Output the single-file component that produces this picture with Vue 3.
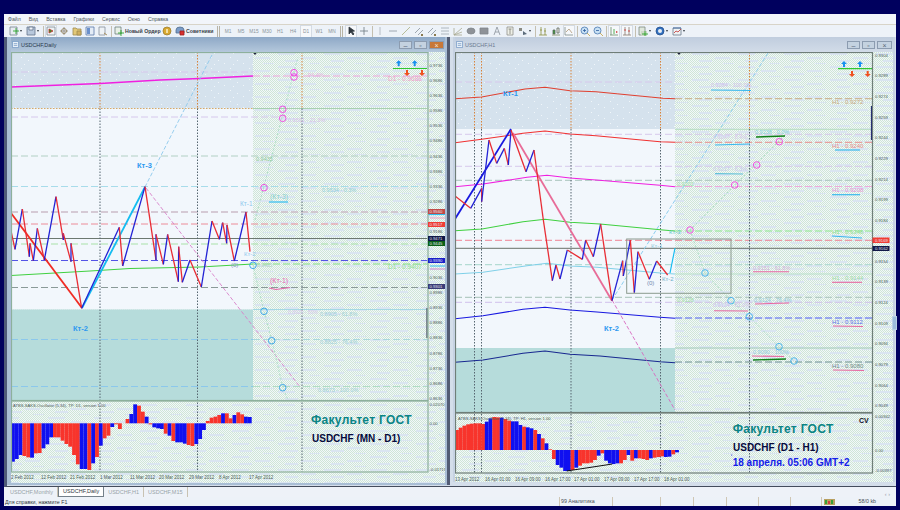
<script setup>
const fromZoom = (ox, oy, list) => list.map(([x, y]) => [ox + x / 3, oy + y / 3])
const pts = (list) => list.map((p) => p.join(',')).join(' ')

const menu = ['Файл', 'Вид', 'Вставка', 'Графики', 'Сервис', 'Окно', 'Справка']

const icons = {
  chart: [['M1 1h6v8H1z', '#f4f4ee', '#7d8a96'], ['M3 7V4M5 7V3', 'none', '#7a8a78']],
  add: [['M1 1h7v8H1z', '#e8edf2', '#73818e'], ['M4 5h6M7 2v6', 'none', '#18a018']],
  disk: [['M1 1h8v8H1z', '#b8c8dc', '#66758a'], ['M3 1h4v3H3z', '#f0f4f8', '#66758a']],
  arrows: [['M1 1h8v8H1z', '#eef2f4', '#7d8a96'], ['M3 3l4 2-4 2z', '#2a9a2a', '#c83030']],
  target: [['M5 1v8M1 5h8', 'none', '#8a8478'], ['M2.5 5a2.5 2.5 0 1 0 5 0a2.5 2.5 0 1 0-5 0', 'none', '#8a7a50']],
  folder: [['M1 2h3l1 1h4v6H1z', '#e2c878', '#a08c50'], ['M5 5h4v4H5z', '#d0b060', '#a08c50']],
  box: [['M1 1h8v8H1z', '#e4ecf6', '#5a78a8'], ['M2 2h3v6H2z', '#6a90cc', 'none']],
  page: [['M1 1h6v8H1z', '#eef2f6', '#85919c'], ['M6 7l3 2', 'none', '#a08040']],
  order: [['M1 1h6v7H1z', '#e8f0e8', '#70807c'], ['M4 7h6M7 4v6', 'none', '#18a018']],
  gold: [['M1 5a4 4 0 1 0 8 0a4 4 0 1 0-8 0', '#d8a830', '#a08030'], ['M4 3h2v4H4z', '#f4e0a0', 'none']],
  robot: [['M1 4a4 3 0 1 1 8 0v3H1z', '#7a9cc8', '#55708f'], ['M5 5h4v4H5z', '#d83030', '#a02020']],
  cursor: [['M3 1v7l2-2 2 3 1-1-2-2.5 2.5-.5z', '#303840', '#303840']],
  cross: [['M5 1v8M1 5h8', 'none', '#6d7882']],
  vert: [['M5 1v8', 'none', '#a8b0b8']],
  horiz: [['M1 5h8', 'none', '#8a949e']],
  slant: [['M1 9L9 1', 'none', '#a8ae80']],
  chan: [['M1 7L6 2M4 9l5-5', 'none', '#88929c'], ['M7 8h2v2H7z', '#8a7a50', 'none']],
  fibo: [['M1 2h8M1 5h8M1 8h8', 'none', '#a0a8b0']],
  fan: [['M1 9L9 2M1 9L9 6M1 2v7h8', 'none', '#a8a890']],
  ellipse: [['M1 5a4 3 0 1 0 8 0a4 3 0 1 0-8 0', '#8e9298', '#80868c']],
  rect: [['M1 2h8v6H1z', '#8e9298', '#80868c']],
  letter: [['M2 9l3-8 3 8M3.2 6h3.6', 'none', '#8a929a']],
  label: [['M2 1h6v8H2z', '#eef0e8', '#90908a'], ['M3.5 3h3M5 3v5', 'none', '#808078']],
  shapes: [['M1 2h3v3H1z', '#8a8a82', 'none'], ['M5 5l4 3-4 1z', '#5a6a7a', 'none']],
  bars: [['M3 1v8M7 2v7M1 9h8', 'none', '#8a9040'], ['M2 4h2M6 5h2', 'none', '#8a9040']],
  candles: [['M2 4h2v4H2z', '#3a9a3a', '#606860'], ['M6 2h2v5H6z', '#f0f0e8', '#606860'], ['M1 9h8', 'none', '#808a60']],
  lineChart: [['M1 1v8h8', 'none', '#7d8a8a'], ['M2 6l3-3 3 4', 'none', '#b09878']],
  zoomIn: [['M1 4.5a3.5 3.5 0 1 0 7 0a3.5 3.5 0 1 0-7 0', '#c8e0f4', '#4a78b0'], ['M7 7l3 3', 'none', '#c0a040'], ['M3 4.5h3M4.5 3v3', 'none', '#3060a0']],
  zoomOut: [['M1 4.5a3.5 3.5 0 1 0 7 0a3.5 3.5 0 1 0-7 0', '#c8e0f4', '#4a78b0'], ['M7 7l3 3', 'none', '#c0a040'], ['M3 4.5h3', 'none', '#3060a0']],
  shift: [['M2 1v8M1 9h8', 'none', '#6a8a6a'], ['M5 3v5', 'none', '#30a030'], ['M7 5l2 1-2 1z', '#c83030', 'none']],
  scroll: [['M3 1v8M7 1v8M1 9h8', 'none', '#8a7a70'], ['M2 4h2M6 5h2', 'none', '#d02828']],
  tmpl: [['M1 1h6v8H1z', '#dfe8dc', '#7f8a80'], ['M3 5h6v5H3z', '#cdd8c8', 'none'], ['M4 8h6M7 5v5', 'none', '#18a018']],
  globe: [['M1 5a4 4 0 1 0 8 0a4 4 0 1 0-8 0', '#3070c0', '#28508c'], ['M3 5a2 2 0 1 0 4 0a2 2 0 1 0-4 0', '#e8eef4', 'none']],
  tester: [['M1 2h8v7H1z', '#eef2f4', '#6a7a8c'], ['M2 7l2-2 2 1 3-3', 'none', '#c03030'], ['M1 2h8', 'none', '#3060a0']],
}

const toolbar = [
  { icon: 'add', arrow: true }, { icon: 'disk', arrow: true }, { sep: 1 },
  { icon: 'arrows', pressed: true }, { icon: 'target' }, { icon: 'folder' }, { icon: 'box' }, { icon: 'page' }, { sep: 1 },
  { icon: 'order', text: 'Новый Ордер', cls: 'wide-order' }, { icon: 'gold' }, { icon: 'robot', text: 'Советники', cls: 'wide-expert' }, { sep: 2 },
  { tf: 'M1' }, { tf: 'M5' }, { tf: 'M15' }, { tf: 'M30' }, { tf: 'H1' }, { tf: 'H4' }, { tf: 'D1', pressed: true }, { tf: 'W1' }, { tf: 'MN' }, { sep: 2 },
  { icon: 'cursor', pressed: true }, { icon: 'cross' }, { sep: 1 },
  { icon: 'vert' }, { icon: 'horiz' }, { icon: 'slant' }, { icon: 'chan' }, { icon: 'chan' }, { icon: 'fibo' },
  { icon: 'fan' }, { icon: 'ellipse' }, { icon: 'rect' }, { icon: 'letter' }, { icon: 'label' }, { icon: 'shapes', arrow: true }, { sep: 1 },
  { icon: 'bars' }, { icon: 'candles' }, { icon: 'lineChart', pressed: true }, { sep: 1 },
  { icon: 'zoomIn' }, { icon: 'zoomOut' }, { sep: 1 },
  { icon: 'shift', pressed: true }, { icon: 'scroll', pressed: true }, { sep: 1 },
  { icon: 'tmpl', arrow: true }, { icon: 'globe', arrow: true }, { icon: 'tester', arrow: true },
]

const zigzagSegments = (list) =>
  list.slice(1).map((p, i) => ({
    a: list[i],
    b: p,
    color: p[1] < list[i][1] ? '#2222d4' : '#e82c34',
  }))

// list: [ y in the zoomed crop, colour ]
const barsFrom = (startX, step, zero, list) =>
  list.map(([zy, c], i) => {
    const y = 395 + zy / 3
    return {
      x: startX + i * step,
      y: Math.min(y, zero),
      h: Math.abs(y - zero),
      fill: c === 'b' ? '#1010f0' : '#f8342c',
    }
  })

const ticks = (first, step, start, pips, count) =>
  Array.from({ length: count }, (_, i) => ({
    y: first + i * step,
    t: (start - i * pips).toFixed(4),
  }))

const freeTicks = (c) =>
  c.prices.filter((p) => !c.tags.some((t) => Math.abs(p.y - (t.y + t.h / 2)) < 5))

const LAV = '#d6c8ec'
const PINK = '#f0a8dc'

const charts = [
  {
    title: 'USDCHF,Daily',
    active: true,
    view: '11 52 434 431',
    w: 434,
    h: 431,
    x0: 11,
    y0: 52,
    shade: 253,
    right: 427.5,
    mainBottom: 400,
    subTop: 401,
    subBottom: 472,
    frame: '#8db09c',
    marker: 255,
    bands: [
      { y: 52, h: 56.5, fill: 'url(#speckle)' },
      { y: 108.5, h: 201, fill: '#f2f7fc' },
      { y: 309.5, h: 90.5, fill: '#b6dcdb' },
    ],
    topBandEnd: 108.5,
    vlines: [100, 197.5, 302],
    hlines: [
      { y: 72, c: LAV, dash: true, end: 253 },
      { y: 76, c: PINK, dash: true, start: 253 },
      { y: 108.5, c: '#d8a868', dash: true, dot: true, end: 253 },
      { y: 108.5, c: '#a8d0b0', start: 253 },
      { y: 117, c: LAV, dash: true, end: 285 },
      { y: 156, c: '#b2d0c4', dash: true },
      { y: 186.5, c: '#a8dcea', dash: true },
      { y: 212, c: '#ccbcc8', dash: true, w: 1.4 },
      { y: 224, c: '#ec8c98', dash: true },
      { y: 238.5, c: '#6c7870' },
      { y: 244, c: '#a8e2a8', dash: true, w: 1.2 },
      { y: 260.5, c: '#5454e6', dash: true },
      { y: 264, c: '#86e086', dash: true, start: 253 },
      { y: 287.5, c: '#8a9a98', dash: true },
      { y: 309.5, c: '#a4d8e4', start: 253 },
      { y: 339.5, c: '#8cc8ec', dash: true, end: 253 },
      { y: 339.5, c: '#a8d8dc', dash: true, start: 253 },
      { y: 386.5, c: '#8cc8ec', dash: true, end: 253 },
      { y: 386.5, c: '#b0dcc4', dash: true, start: 253 },
    ],
    lines: [
      { p: [[11, 87], [100, 83.5], [160, 80], [200, 78.5], [253, 76]], c: '#f020e0', w: 1.3 },
      { p: [[11, 275.5], [90, 271], [130, 268.5], [200, 267], [253, 264]], c: '#40d040', w: 1 },
      { p: [[145, 187], [213, 53]], c: '#8cc8ec', w: 0.9, dash: '4 2' },
      { p: [[146, 188], [300, 387]], c: '#d880c8', w: 0.9, dash: '4 2' },
      { p: [[255, 220], [298, 57]], c: '#a4dcc0', w: 0.9, dash: '2 2' },
      { p: [[253, 265], [264, 311], [272, 341], [283, 388], [288, 400]], c: '#a4dcc0', w: 0.9, dash: '2 2' },
      { p: [[11, 213], [82, 308]], c: '#f02c24', w: 1.8 },
      { p: [[82, 308], [145, 187]], c: '#14bcf0', w: 1.8 },
      { p: [[269, 202], [288, 202]], c: '#30bcf0', w: 1.2 },
      { p: [[269, 288], [276, 289.5], [290, 287.5]], c: '#e868a8', w: 1.2 },
      { p: [[393, 68.5], [427, 68.5]], c: '#30c830', w: 1.2 },
      { p: [[428, 214.5], [445, 214.5]], c: '#30bcf0', w: 1.2 },
      { p: [[430, 218], [445, 218]], c: '#f0a0c0', w: 1 },
      { p: [[430, 266], [445, 266]], c: '#30bcf0', w: 1 },
      { p: [[430, 269], [445, 269]], c: '#d088c8', w: 1 },
      { p: [[427, 308], [427, 338]], c: '#404858', w: 1.2 },
    ],
    zigzag: zigzagSegments(
      fromZoom(0, 200, [
        [33, 93], [45, 148], [67, 27], [88, 170], [90, 130], [100, 182], [112, 85], [133, 180], [168, -10],
        [190, 120], [190, 100], [213, 185], [213, 130], [245, 325], [358, 82], [368, 198], [435, -40], [468, 180],
        [468, 103], [490, 193], [503, 103], [535, 245], [536, 140], [547, 247], [570, 180], [604, 261], [636, 63],
        [658, 118], [668, 68], [680, 130], [681, 75], [703, 183], [738, 36], [750, 155],
      ]),
    ),
    circles: [
      { x: 294, y: 72.7, c: '#f040e0' }, { x: 294, y: 77, c: '#f040e0' }, { x: 282.7, y: 109.3, c: '#f040e0' },
      { x: 282.7, y: 118.3, c: '#f040e0' }, { x: 264, y: 187.7, c: '#f040e0' }, { x: 253, y: 265.3, c: '#30a0e8' },
      { x: 264, y: 311.3, c: '#30a0e8' }, { x: 271.7, y: 340.7, c: '#30a0e8' }, { x: 282.7, y: 387.7, c: '#30a0e8' },
    ],
    labels: [
      { x: 137, y: 168, t: 'Кт-3', c: '#2c98f0', s: 7.5, b: 1 },
      { x: 73, y: 331, t: 'Кт-2', c: '#2c98f0', s: 7.5, b: 1 },
      { x: 240, y: 206, t: 'Кт-1', c: '#90c8ec', s: 6.5 },
      { x: 244, y: 256, t: 'Кт-2', c: '#90c8ec', s: 6 },
      { x: 231, y: 267, t: '(0)', c: '#8090c0', s: 6 },
      { x: 270, y: 199, t: '(Кт-3)', c: '#88d0d0', s: 7 },
      { x: 270, y: 283, t: '(Кт-1)', c: '#e868b8', s: 7 },
      { x: 388, y: 81, t: 'D1 - 0.9688', c: '#f0a0c8', s: 6.5 },
      { x: 388, y: 269, t: 'D1 - 0.9407', c: '#90e090', s: 6.5 },
      { x: 256, y: 161, t: '0.9435', c: '#90c8a0', s: 5.5 },
      { x: 308, y: 77, t: '94.4%', c: '#e8b0e0', s: 5.5 },
      { x: 288, y: 122, t: '0.9561 - 21.3%', c: '#d8c0ec', s: 5.5 },
      { x: 322, y: 192, t: '0.9534 - 0.3%', c: '#90d0d8', s: 5.5 },
      { x: 288, y: 314, t: '0.8925 - 50%', c: '#d8c8ec', s: 5 },
      { x: 320, y: 316, t: '0.8905 - 61.8%', c: '#a0d0d8', s: 5.5 },
      { x: 320, y: 344, t: '0.8825 - 76.4%', c: '#a0d0d8', s: 5.5 },
      { x: 318, y: 392, t: '0.8673 - 100.0%', c: '#a0d0d8', s: 5.5 },
      { x: 257, y: 267, t: '0.9405', c: '#b0d8b8', s: 5 },
    ],
    arrows: { up: [398.7, 414.7], down: [407, 422], yUp: 63.3, yDown: 73 },
    tags: [
      { y: 209, h: 5, fill: '#c04a48', t: '0.9560' },
      { y: 222, h: 5, fill: '#f03c34', t: '0.9517' },
      { y: 236, h: 5, fill: '#101848', t: '0.9471' },
      { y: 241, h: 5, fill: '#0a6018', t: '0.9445' },
      { y: 258, h: 5, fill: '#1a20c8', t: '0.9390' },
      { y: 284, h: 5, fill: '#3a3c78', t: '0.9301' },
    ],
    prices: ticks(64.7, 15.15, 0.9736, 0.005, 23),
    axisX: 429.5,
    subAxis: [
      { y: 406, t: '0.02070' },
      { y: 425, t: '0.00' },
      { y: 471, t: '-0.01719' },
    ],
    zero: 423.3,
    subTitle: 'ATBS-SAKS-Oscillator (5,34), TP: D1, version 1.00',
    subTitleX: 13,
    subTitleY: 407,
    bars: barsFrom(11, 3.82, 423.3, [
      [200, 'b'], [192, 'b'], [180, 'b'], [183, 'r'], [187, 'r'], [188, 'b'], [175, 'r'], [174, 'r'], [160, 'b'],
      [148, 'b'], [127, 'b'], [127, 'r'], [127, 'r'], [137, 'r'], [147, 'r'], [155, 'r'], [180, 'r'], [208, 'r'],
      [222, 'b'], [222, 'b'], [225, 'r'], [205, 'b'], [186, 'r'], [152, 'b'], [130, 'r'], [122, 'r'], [96, 'b'],
      [88, 'r'], [102, 'r'], [85, 'r'], [72, 'r'], [57, 'b'], [28, 'b'], [32, 'r'], [50, 'r'], [65, 'b'], [88, 'r'],
      [97, 'b'], [100, 'b'], [102, 'b'], [116, 'r'], [122, 'b'], [138, 'r'], [142, 'b'], [142, 'b'], [146, 'b'],
      [150, 'r'], [153, 'r'], [147, 'b'], [132, 'b'], [105, 'b'], [78, 'r'], [68, 'r'], [65, 'r'], [60, 'r'],
      [55, 'b'], [55, 'r'], [70, 'r'], [60, 'b'], [52, 'r'], [58, 'r'], [65, 'b'], [66, 'b'],
    ]),
    trend: null,
    brand: { x: 311, y: 424, t: 'Факультет ГОСТ' },
    pair: { x: 312, y: 441.5, t: 'USDCHF (MN - D1)' },
    note: null,
    cv: false,
    timeY: 479,
    times: [
      [11, '2 Feb 2012'], [41, '12 Feb 2012'], [70, '21 Feb 2012'], [100, '1 Mar 2012'], [130, '11 Mar 2012'],
      [159, '20 Mar 2012'], [189, '29 Mar 2012'], [219, '8 Apr 2012'], [249, '17 Apr 2012'],
    ],
    rect: null,
  },
  {
    title: 'USDCHF,H1',
    active: false,
    view: '455 52 438 430',
    w: 438,
    h: 430,
    x0: 455,
    y0: 52,
    shade: 675,
    right: 872,
    mainBottom: 412,
    subTop: 413,
    subBottom: 473,
    frame: '#6f7e78',
    marker: 679,
    bands: [
      { y: 52, h: 77, fill: 'url(#speckle)' },
      { y: 129, h: 219, fill: '#f2f7fc' },
      { y: 348, h: 64, fill: '#b6dcdb' },
    ],
    topBandEnd: 129,
    vlines: [474.5, 481.5, 571, 660.5, 749.5],
    hlines: [
      { y: 82, c: LAV, dash: true, end: 675 },
      { y: 98.7, c: '#c8aa84', dash: true, start: 675 },
      { y: 129.3, c: '#b4dcc0', start: 675 },
      { y: 134.3, c: LAV, dash: true },
      { y: 142.3, c: '#e88c8c', dash: true, start: 675 },
      { y: 166.3, c: LAV, dash: true },
      { y: 180.3, c: '#a8c4bc', dash: true },
      { y: 186.5, c: PINK, dash: true, start: 675 },
      { y: 231, c: '#8ce88c', dash: true, start: 675 },
      { y: 240.3, c: '#f08494', dash: true },
      { y: 248.3, c: '#687068' },
      { y: 264.7, c: '#b4dcd4', dash: true, w: 1.2 },
      { y: 274, c: '#b8e0c8', start: 675 },
      { y: 297.3, c: '#b4ccc4', dash: true, w: 1.2 },
      { y: 302.3, c: '#d0c0ec', dash: true },
      { y: 318, c: '#5060f0', dash: true, start: 675 },
      { y: 348, c: '#a0c8b8', start: 675 },
      { y: 362, c: '#6c9090', dash: true, start: 675 },
    ],
    lines: [
      { p: [[455, 98.7], [481.7, 97], [525, 89], [545, 87.3], [570, 90.7], [596, 91.7], [663, 98.3], [675, 98.7]], c: '#e04030', w: 1.1 },
      { p: [[455, 142.7], [481.7, 139.3], [523, 133.3], [545, 131], [570, 134], [596, 135.7], [660, 141.7], [675, 142.3]], c: '#f03030', w: 1.1 },
      { p: [[455, 186.7], [483, 184], [527, 177.3], [547, 175.3], [570, 178], [596, 180], [660, 185.3], [675, 186.7]], c: '#f020e0', w: 1.1 },
      { p: [[455, 230.7], [482, 229], [523, 221.7], [545, 219.3], [570, 222.3], [600, 224], [663, 230], [675, 231]], c: '#40d040', w: 1.1 },
      { p: [[455, 274], [483, 272.3], [527, 265.7], [547, 263.3], [570, 266], [597, 267.3], [663, 273.3], [675, 274]], c: '#80d0e8', w: 1.1 },
      { p: [[455, 318.7], [483, 315.7], [523, 309.3], [545, 307.3], [570, 310], [597, 312], [660, 317.3], [675, 318.3]], c: '#1818e0', w: 1.1 },
      { p: [[455, 362.3], [483, 360], [523, 353.3], [545, 351], [570, 354.3], [600, 356], [660, 361.7], [675, 362.7]], c: '#182890', w: 1.1 },
      { p: [[612, 300], [768, 53]], c: '#80c8ec', w: 0.9, dash: '4 2' },
      { p: [[612, 300], [675, 410]], c: '#d868c0', w: 0.9, dash: '4 2' },
      { p: [[690, 230], [785, 135]], c: '#a4dcc0', w: 0.9, dash: '2 2' },
      { p: [[690, 230], [705, 273], [731, 300.7], [749.3, 316.7], [779, 346.7], [794, 361]], c: '#a4dcc0', w: 0.9, dash: '2 2' },
      { p: [[455, 219], [511, 129]], c: '#1818e0', w: 1.8 },
      { p: [[513, 133], [612, 300.7]], c: '#e86c98', w: 1.8 },
      { p: [[670, 273], [675, 248]], c: '#18bcf0', w: 1.2 },
      { p: [[711, 90], [751, 90.5]], c: '#38b8ee', w: 1.2 },
      { p: [[715, 145], [750, 144]], c: '#38b8ee', w: 1.2 },
      { p: [[715, 173.7], [743, 174]], c: '#60c0d8', w: 1.2 },
      { p: [[756, 137], [785, 136]], c: '#108018', w: 1.4 },
      { p: [[835, 150], [860, 150]], c: '#38b8ee', w: 1.2 },
      { p: [[832, 194.7], [860, 194.7]], c: '#38b8ee', w: 1.2 },
      { p: [[832, 236], [862, 238]], c: '#38b8ee', w: 1 },
      { p: [[832, 282.3], [862, 282.3]], c: '#e868a0', w: 1.1 },
      { p: [[833, 326], [863, 326.5]], c: '#e868a0', w: 1.1 },
      { p: [[833, 370], [864, 370.5]], c: '#e868a0', w: 1.1 },
      { p: [[753, 271.7], [789, 271.7]], c: '#e868a0', w: 1.1 },
      { p: [[755, 304], [789, 303]], c: '#e868a0', w: 1.1 },
      { p: [[714, 310.7], [748, 311]], c: '#e868a0', w: 1.1 },
      { p: [[752, 356], [784, 356.5]], c: '#e868a0', w: 1.1 },
      { p: [[753, 360], [786, 359]], c: '#108018', w: 1.4 },
      { p: [[838, 68.7], [872, 68.7]], c: '#30c830', w: 1.2 },
      { p: [[871.5, 106], [871.5, 140]], c: '#202870', w: 1.2 },
    ],
    zigzag: zigzagSegments([
      ...fromZoom(450, 40, [
        [15, 468], [62, 505], [95, 445], [95, 485], [117, 300], [140, 370], [163, 325], [175, 375], [183, 270],
        [228, 395], [252, 330], [280, 540],
      ]),
      ...fromZoom(450, 210, [
        [307, 212], [318, 165], [330, 207], [352, 120], [397, 148], [407, 90], [430, 140], [452, 42], [486, 272],
        [518, 152], [520, 198], [541, 90], [553, 248], [564, 125], [598, 208], [620, 153], [653, 195],
      ]),
    ]),
    circles: [
      { x: 779.3, y: 141.7, c: '#f040e0' }, { x: 756.7, y: 165, c: '#f040e0' }, { x: 734.7, y: 185, c: '#f040e0' },
      { x: 690, y: 230, c: '#f040e0' }, { x: 705, y: 273, c: '#40b0ec' }, { x: 731, y: 300.7, c: '#40b0ec' },
      { x: 749.3, y: 316.7, c: '#40b0ec' }, { x: 779, y: 346.7, c: '#40b0ec' }, { x: 794, y: 361, c: '#40b0ec' },
    ],
    labels: [
      { x: 503, y: 96, t: 'Кт-1', c: '#2c98f0', s: 7.5, b: 1 },
      { x: 604, y: 331, t: 'Кт-2', c: '#2c98f0', s: 7.5, b: 1 },
      { x: 651, y: 248, t: 'Кт-1', c: '#90c8d8', s: 6 },
      { x: 662, y: 281, t: 'Кт-2', c: '#70b0c8', s: 6 },
      { x: 647, y: 285, t: '(0)', c: '#7088b0', s: 6 },
      { x: 669, y: 234, t: 'Кт-3', c: '#60c8c8', s: 6 },
      { x: 832, y: 104, t: 'H1 - 0.9272', c: '#c8a880', s: 6 },
      { x: 832, y: 148, t: 'H1 - 0.9240', c: '#e88c8c', s: 6 },
      { x: 832, y: 192, t: 'H1 - 0.9208', c: '#e890d8', s: 6 },
      { x: 832, y: 234, t: 'H1 - 0.9348', c: '#90e090', s: 6 },
      { x: 832, y: 280, t: 'H1 - 0.9144', c: '#a0dca8', s: 6 },
      { x: 832, y: 324, t: 'H1 - 0.9112', c: '#6070e8', s: 6 },
      { x: 832, y: 368, t: 'H1 - 0.9080', c: '#708c88', s: 6 },
      { x: 711, y: 87, t: '0.9284 - 100.0%', c: '#d0c0ec', s: 5.5 },
      { x: 713, y: 139, t: '0.9247 - 8.4%', c: '#d8c8ec', s: 5.5 },
      { x: 713, y: 171, t: '0.9217 - 6.3%', c: '#c8c8ec', s: 5.5 },
      { x: 755, y: 134, t: '0.9238 - 0.0%', c: '#80d0d8', s: 5.5 },
      { x: 677, y: 186, t: '0.9202', c: '#a0dca8', s: 5.5 },
      { x: 753, y: 270, t: '0.9151 - 61.8%', c: '#d0b0d8', s: 5.5 },
      { x: 677, y: 302, t: '0.9128', c: '#a0dca8', s: 5.5 },
      { x: 713, y: 307, t: '0.9124 - 61.0%', c: '#d0c0ec', s: 5.5 },
      { x: 754, y: 302, t: '0.9124 - 76.4%', c: '#90c8d8', s: 5.5 },
      { x: 753, y: 354, t: '0.9090 - 100%', c: '#90c8d8', s: 5.5 },
    ],
    arrows: { up: [844, 860], down: [852, 867.7], yUp: 64, yDown: 74 },
    tags: [
      { y: 237.5, h: 5.5, fill: '#f03c34', t: '0.9169' },
      { y: 246, h: 5, fill: '#101848', t: '0.9162' },
    ],
    prices: [
      ...ticks(54.7, 20.65, 0.9304, 0.0015, 9),
      ...ticks(260.7, 20.65, 0.9154, 0.0015, 8),
    ],
    axisX: 875,
    subAxis: [
      { y: 418, t: '0.00942' },
      { y: 452, t: '0.00' },
      { y: 472, t: '-0.00397' },
    ],
    zero: 450,
    subTitle: 'ATBS-SAKS-Oscillator (5,34), TP: H1, version 1.00',
    subTitleX: 458,
    subTitleY: 420,
    bars: barsFrom(455, 3.73, 450, [
      [105, 'r'], [98, 'r'], [92, 'r'], [88, 'r'], [86, 'r'], [85, 'r'], [85, 'r'], [87, 'r'], [80, 'b'], [70, 'b'],
      [66, 'r'], [67, 'r'], [68, 'b'], [72, 'r'], [77, 'r'], [79, 'b'], [79, 'b'], [90, 'b'], [95, 'r'], [97, 'b'],
      [100, 'b'], [105, 'r'], [117, 'b'], [130, 'r'], [145, 'b'], [163, 'r'], [192, 'r'], [210, 'b'], [218, 'b'],
      [228, 'b'], [228, 'b'], [225, 'r'], [218, 'b'], [212, 'r'], [205, 'r'], [205, 'r'], [203, 'r'], [195, 'r'],
      [182, 'b'], [175, 'r'], [197, 'b'], [205, 'b'], [207, 'b'], [205, 'b'], [205, 'r'], [195, 'r'], [180, 'b'],
      [197, 'r'], [190, 'b'], [190, 'r'], [192, 'r'], [195, 'r'], [190, 'b'], [188, 'r'], [186, 'r'], [184, 'r'],
      [186, 'b'], [185, 'b'], [178, 'r'], [172, 'b'],
    ]),
    trend: [[566.7, 471], [612.3, 464]],
    brand: { x: 732.7, y: 433, t: 'Факультет ГОСТ' },
    pair: { x: 733, y: 451, t: 'USDCHF (D1 - H1)' },
    note: { x: 732.7, y: 466, t: '18 апреля. 05:06 GMT+2' },
    cv: true,
    timeY: 480.5,
    times: [
      [455, '13 Apr 2012'], [485, '16 Apr 01:00'], [515, '16 Apr 09:00'], [545, '16 Apr 17:00'], [574, '17 Apr 01:00'],
      [604, '17 Apr 09:00'], [634, '17 Apr 17:00'], [664, '18 Apr 01:00'],
    ],
    rect: { x: 626.7, y: 239, w: 104.3, h: 54.3 },
  },
]

const tabs = [
  { t: 'USDCHF,Monthly' },
  { t: 'USDCHF,Daily', active: true },
  { t: 'USDCHF,H1' },
  { t: 'USDCHF,M15' },
]

const statusCells = ['99 Аналитика', '', '', '', '', '', '']
</script>

<template>
  <div class="screen">
    <div class="terminal">
      <nav class="menu">
        <span v-for="m in menu" :key="m">{{ m }}</span>
      </nav>

      <div class="toolbar">
        <template v-for="(item, i) in toolbar" :key="i">
          <span v-if="item.sep" class="sep" :class="{ double: item.sep === 2 }"></span>
          <span v-else-if="item.tf" class="tf" :class="{ pressed: item.pressed }">{{ item.tf }}</span>
          <span v-else class="tool" :class="[item.cls, { pressed: item.pressed, 'with-arrow': item.arrow }]">
            <svg class="tool-icon" viewBox="0 0 10 10" width="10" height="10">
              <path
                v-for="(p, j) in icons[item.icon]"
                :key="j"
                :d="p[0]"
                :fill="p[1]"
                :stroke="p[2]"
                stroke-width="0.8"
              />
            </svg>
            <b v-if="item.text">{{ item.text }}</b>
            <i v-if="item.arrow" class="drop"></i>
          </span>
        </template>
      </div>

      <div class="mdi">
        <section v-for="c in charts" :key="c.title" class="window" :class="{ inactive: !c.active }">
          <header class="title-bar">
            <svg class="doc-icon" viewBox="0 0 8 8" width="7" height="7">
              <path d="M.5.5h7v7h-7z" fill="#e8f0f8" stroke="#6a90c0" stroke-width="0.8" />
              <path d="M2 3h4M2 5h4" stroke="#6a90c0" stroke-width="0.8" />
            </svg>
            <span class="title-text">{{ c.title }}</span>
            <span class="controls">
              <span class="ctl">–</span>
              <span class="ctl">▫</span>
              <span class="ctl close">×</span>
            </span>
          </header>

          <svg class="chart" :viewBox="c.view" :width="c.w" :height="c.h">
            <defs>
              <pattern id="dither" width="2" height="2" patternUnits="userSpaceOnUse" shape-rendering="crispEdges">
                <rect width="2" height="2" fill="#f2f7fa" />
                <rect width="1" height="1" fill="#cfe6d6" />
                <rect x="1" y="1" width="1" height="1" fill="#cfe6d6" />
              </pattern>
              <pattern id="blotch" width="46" height="13" patternUnits="userSpaceOnUse" shape-rendering="crispEdges">
                <rect x="2" y="1" width="17" height="2" fill="#dae5f1" />
                <rect x="25" y="5" width="15" height="2" fill="#dae5f1" />
                <rect x="9" y="8" width="13" height="2" fill="#dae5f1" />
                <rect x="33" y="11" width="11" height="1" fill="#dae5f1" />
              </pattern>
              <pattern id="speckle" width="19" height="11" patternUnits="userSpaceOnUse" shape-rendering="crispEdges">
                <rect width="19" height="11" fill="#d5e2ed" />
                <rect x="2" y="2" width="1" height="1" fill="#f0f6fa" />
                <rect x="9" y="5" width="1" height="1" fill="#f0f6fa" />
                <rect x="15" y="8" width="1" height="1" fill="#f0f6fa" />
                <rect x="5" y="9" width="1" height="1" fill="#f0f6fa" />
              </pattern>
            </defs>

            <rect :x="c.x0" :y="c.y0" :width="c.w" :height="c.h" fill="url(#dither)" />
            <rect :x="c.x0" :y="c.y0" :width="c.w" :height="c.h" fill="url(#blotch)" />

            <rect
              v-for="b in c.bands"
              :key="b.y"
              :x="c.x0"
              :y="b.y"
              :width="c.shade - c.x0"
              :height="b.h"
              :fill="b.fill"
            />

            <!-- горизонтальные уровни -->
            <line
              v-for="(l, i) in c.hlines"
              :key="'h' + i"
              :x1="l.start ?? c.x0"
              :x2="l.end ?? c.right"
              :y1="l.y"
              :y2="l.y"
              :stroke="l.c"
              :stroke-width="l.w ?? 1"
              :stroke-dasharray="l.dot ? '1.5 1.5' : l.dash ? '7 3' : null"
            />

            <!-- вертикальные разделители -->
            <g v-for="x in c.vlines" :key="x">
              <line :x1="x" :x2="x" :y1="c.y0" :y2="c.topBandEnd" stroke="#d8843c" stroke-dasharray="1.5 1.5" />
              <line :x1="x" :x2="x" :y1="c.topBandEnd" :y2="c.subBottom" stroke="#566670" stroke-dasharray="1.5 1.5" />
            </g>

            <polyline
              v-for="(l, i) in c.lines"
              :key="'l' + i"
              :points="pts(l.p)"
              fill="none"
              :stroke="l.c"
              :stroke-width="l.w"
              :stroke-dasharray="l.dash"
            />

            <line
              v-for="(s, i) in c.zigzag"
              :key="'z' + i"
              :x1="s.a[0]"
              :y1="s.a[1]"
              :x2="s.b[0]"
              :y2="s.b[1]"
              :stroke="s.color"
              stroke-width="1.3"
            />

            <rect
              v-if="c.rect"
              :x="c.rect.x"
              :y="c.rect.y"
              :width="c.rect.w"
              :height="c.rect.h"
              fill="none"
              stroke="#8a9a8e"
            />

            <circle
              v-for="(o, i) in c.circles"
              :key="'c' + i"
              :cx="o.x"
              :cy="o.y"
              r="3.3"
              fill="none"
              :stroke="o.c"
              stroke-width="0.9"
            />

            <text
              v-for="(t, i) in c.labels"
              :key="'t' + i"
              :x="t.x"
              :y="t.y"
              :fill="t.c"
              :font-size="t.s"
              :font-weight="t.b ? 700 : 400"
            >{{ t.t }}</text>

            <!-- стрелки D1 / H1 -->
            <g v-for="x in c.arrows.up" :key="'u' + x" :transform="`translate(${x} ${c.arrows.yUp})`">
              <path d="M0-3l3 3H1v3H-1V0H-3z" fill="#1890f0" />
            </g>
            <g v-for="x in c.arrows.down" :key="'d' + x" :transform="`translate(${x} ${c.arrows.yDown})`">
              <path d="M0 3l3-3H1v-3H-1V0H-3z" fill="#f05020" />
            </g>

            <path :d="`M${c.marker - 2.5} 52h5l-2.5 3z`" fill="#101030" />

            <!-- осциллятор -->
            <rect
              v-for="(b, i) in c.bars"
              :key="'b' + i"
              :x="b.x"
              :y="b.y"
              width="3.85"
              :height="b.h"
              :fill="b.fill"
            />
            <polyline v-if="c.trend" :points="pts(c.trend)" fill="none" stroke="#101010" stroke-width="1" />

            <rect
              :x="c.x0 + 0.5"
              :y="c.y0 + 0.5"
              :width="c.right - c.x0"
              :height="c.mainBottom - c.y0"
              fill="none"
              :stroke="c.frame"
              stroke-width="1.2"
            />
            <rect
              :x="c.x0 + 0.5"
              :y="c.subTop"
              :width="c.right - c.x0"
              :height="c.subBottom - c.subTop"
              fill="none"
              :stroke="c.frame"
              stroke-width="1.2"
            />

            <text :x="c.subTitleX" :y="c.subTitleY" class="sub-title">{{ c.subTitle }}</text>
            <text :x="c.brand.x" :y="c.brand.y" class="brand">{{ c.brand.t }}</text>
            <text :x="c.pair.x" :y="c.pair.y" class="pair">{{ c.pair.t }}</text>
            <text v-if="c.note" :x="c.note.x" :y="c.note.y" class="note">{{ c.note.t }}</text>
            <circle v-if="c.note" cx="731.7" cy="455" r="0.6" fill="#1818e0" />
            <text v-if="c.cv" x="859" y="423" class="cv">CV</text>

            <text
              v-for="p in freeTicks(c)"
              :key="p.t"
              :x="c.axisX"
              :y="p.y + 2"
              class="axis"
            >{{ p.t }}</text>
            <text
              v-for="p in c.subAxis"
              :key="p.t"
              :x="c.axisX"
              :y="p.y"
              class="axis"
            >{{ p.t }}</text>
            <g v-for="t in c.tags" :key="t.t">
              <rect :x="c.right + 0.5" :y="t.y" width="17" :height="t.h" :fill="t.fill" />
              <text :x="c.axisX" :y="t.y + t.h - 0.8" class="axis tag">{{ t.t }}</text>
            </g>
            <text
              v-for="t in c.times"
              :key="t[1]"
              :x="t[0]"
              :y="c.timeY"
              class="time"
            >{{ t[1] }}</text>
          </svg>
        </section>
      </div>

      <div class="tabs">
        <span v-for="t in tabs" :key="t.t" class="tab" :class="{ active: t.active }">{{ t.t }}</span>
        <span class="tab-arrows">‹ ›</span>
      </div>

      <footer class="status">
        <span class="hint">Для справки, нажмите F1</span>
        <span v-for="(s, i) in statusCells" :key="i" class="cell">{{ s }}</span>
        <span class="cell last">
          <svg class="conn" viewBox="0 0 11 6" width="11" height="6" shape-rendering="crispEdges">
            <rect width="11" height="6" fill="#b8a060" />
            <rect x="1" y="1" width="2" height="4" fill="#38a038" />
            <rect x="4" y="2" width="2" height="3" fill="#d04040" />
            <rect x="7" y="1" width="2" height="4" fill="#38a038" />
          </svg>
          <em>58/0 kb</em>
        </span>
      </footer>

      <span class="side-handle"></span>
    </div>
  </div>
</template>

<style>
html,
body {
  margin: 0;
  background: #00005e;
}
</style>

<style scoped>
.screen {
  width: 900px;
  height: 510px;
  box-sizing: border-box;
  padding: 14px 4px 4px;
  background: #00005e;
  font-family: "Liberation Sans", Arial, sans-serif;
  overflow: hidden;
}

.terminal {
  position: relative;
  display: flex;
  flex-direction: column;
  height: 492px;
  background: #edf2f8;
}

.side-handle {
  position: absolute;
  left: 888px;
  top: 302px;
  width: 5px;
  height: 14px;
  background: #9cbcdc;
  border: 1px solid #b8d0e6;
  box-sizing: border-box;
}

.menu {
  display: flex;
  gap: 8px;
  height: 10px;
  padding-left: 4px;
  align-items: center;
  font-size: 5.2px;
  color: #505860;
  background: #f2f5fa;
}

.toolbar {
  display: flex;
  gap: 3px;
  height: 13px;
  padding-left: 5px;
  align-items: center;
  box-sizing: border-box;
  background: #edf2f8;
  border-top: 1px solid #d8d4c8;
}

.sep {
  width: 1px;
  height: 11px;
  margin: 0 -0.5px;
  background: #c4bfb0;
}

.sep.double {
  box-sizing: border-box;
  width: 3px;
  margin: 0;
  background: none;
  border-left: 1px solid #b8b4a6;
  border-right: 1px solid #b8b4a6;
}

.tool {
  display: flex;
  align-items: center;
  height: 11px;
  width: 10px;
  flex: none;
}

.tool.with-arrow {
  width: 14px;
}

.tool.pressed,
.tf.pressed {
  background: #f6f8fb;
  box-shadow: 0 0 0 1px #d4dbe4;
}

.tool-icon {
  flex: none;
}

.drop {
  margin-left: 1px;
  border-left: 1.5px solid transparent;
  border-right: 1.5px solid transparent;
  border-top: 2px solid #303840;
}

.tool b {
  margin-left: 1px;
  font-size: 5.2px;
  color: #384048;
  white-space: nowrap;
}

.wide-order {
  width: 45px;
}

.wide-expert {
  width: 39px;
}

.tf {
  width: 10px;
  flex: none;
  font-size: 4.8px;
  line-height: 11px;
  text-align: center;
  color: #8a929a;
}

.mdi {
  flex: 1;
  display: flex;
  gap: 3px;
  align-items: flex-start;
  min-height: 0;
  box-sizing: border-box;
  border-left: 3px solid #4e5a78;
  border-bottom: 1px solid #444c5c;
  background: #d4deea;
}

.window {
  box-sizing: border-box;
  width: 440px;
  padding: 0 2px 2px 4px;
  background: #a9bed5;
  box-shadow: 3px 0 0 #525c74;
}

.window.inactive {
  width: 442px;
  margin-left: 3px;
  padding: 0 2px 0 2px;
  background: #c6d2e2;
  box-shadow: none;
}

.title-bar {
  display: flex;
  align-items: center;
  height: 15px;
  padding: 0 1px 0 0;
  background: linear-gradient(#8ea8c6, #b4c8dc);
}

.inactive .title-bar {
  background: linear-gradient(#c0cdde, #d2dce8);
}

.doc-icon {
  margin: 0 2px 0 1px;
}

.title-text {
  flex: 1;
  font-size: 5.4px;
  color: #28384c;
}

.inactive .title-text {
  color: #6a7a90;
}

.controls {
  display: flex;
  gap: 2px;
}

.ctl {
  width: 13px;
  height: 8px;
  font-size: 7px;
  line-height: 7px;
  text-align: center;
  color: #5a6878;
  background: #c4d2e0;
  border: 1px solid #8c9cb0;
  box-sizing: border-box;
}

.ctl.close {
  background: #c87838;
  color: #f4e8d8;
  width: 15px;
}

.inactive .ctl.close {
  background: #c4d2e0;
  color: #5a6878;
}

.chart {
  display: block;
  font-family: "Liberation Sans", Arial, sans-serif;
}

.axis {
  font-size: 4.2px;
  fill: #4c6058;
}

.axis.tag {
  fill: #e8e8f0;
}

.time {
  font-size: 4.5px;
  fill: #4c6058;
}

.sub-title {
  font-size: 4.1px;
  fill: #4c5c54;
}

.brand {
  font-size: 12px;
  font-weight: 700;
  letter-spacing: 0.3px;
  fill: #0a8484;
}

.pair {
  font-size: 10px;
  font-weight: 700;
  fill: #060a3c;
}

.note {
  font-size: 10px;
  font-weight: 700;
  fill: #1420e8;
}

.cv {
  font-size: 7px;
  font-weight: 700;
  fill: #10101c;
}

.tabs {
  display: flex;
  align-items: flex-end;
  height: 10px;
  padding-left: 2px;
  font-size: 5.5px;
  color: #98a4a8;
  background: #eef2f8;
}

.tab {
  padding: 0 4px;
  line-height: 10px;
  border-right: 1px solid #c8c2b2;
}

.tab.active {
  color: #303840;
  background: #ffffff;
  border: 1px solid #74808a;
  border-top: 0;
  line-height: 9px;
}

.tab-arrows {
  margin-left: auto;
  margin-right: 6px;
  color: #98a0a8;
}

.status {
  display: grid;
  grid-template-columns: 555px 53px 48px 33px 33px 32px 32px 31px 1fr;
  height: 9px;
  align-items: center;
  font-size: 5.3px;
  color: #484e54;
  background: #edf2f8;
}

.hint {
  padding-left: 1px;
  color: #30363c;
}

.cell {
  height: 9px;
  line-height: 9px;
  padding-left: 1px;
  border-left: 1px solid #cfc6b4;
}

.cell.last {
  display: flex;
  align-items: center;
  justify-content: space-between;
  padding: 0 20px 0 2px;
}

.cell em {
  font-style: normal;
}
</style>
